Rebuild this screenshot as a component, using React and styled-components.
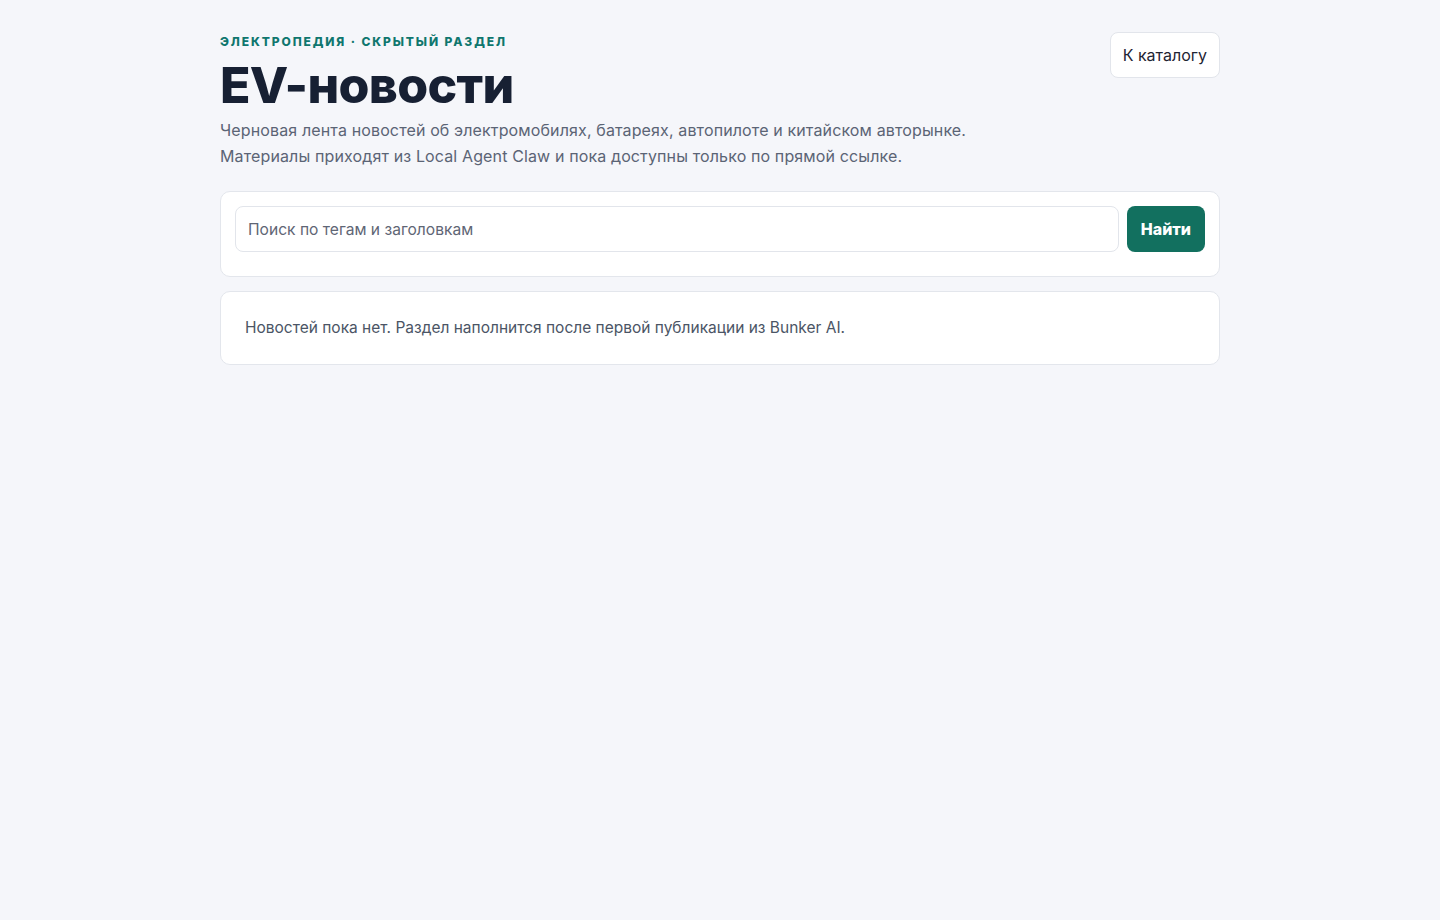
import React from "react";
import styled, { createGlobalStyle } from "styled-components";

const Global = createGlobalStyle`
  * { box-sizing: border-box; }
  body {
    margin: 0;
    background: #f5f6fa;
    font-family: Inter, "Noto Sans", sans-serif;
    color: #111827;
  }
`;

const Page = styled.div`
  width: 1000px;
  margin: 0 auto;
  padding-top: 33px;
  display: flex;
  flex-direction: column;
  gap: 14px;
`;

const Header = styled.header`
  display: flex;
  justify-content: space-between;
  align-items: flex-start;
  margin-top: -1px;
  margin-bottom: 8px;
`;

const Eyebrow = styled.div`
  margin-top: 1px;
  font-size: 12px;
  font-weight: 800;
  letter-spacing: 1.9px;
  text-transform: uppercase;
  color: #0f766e;
  line-height: 18px;
`;

const Title = styled.h1`
  margin: 5px 0 3px;
  font-size: 50px;
  font-weight: 800;
  line-height: 58px;
  letter-spacing: -0.7px;
  color: #172033;
`;

const Lead = styled.p`
  margin: 0;
  font-size: 16px;
  line-height: 26px;
  letter-spacing: 0.13px;
  color: #5b6475;
`;

const BackLink = styled.a`
  display: inline-flex;
  align-items: center;
  height: 46px;
  padding: 0 12px;
  border: 1px solid #e2e5eb;
  border-radius: 8px;
  background: #fff;
  font-size: 16px;
  color: #1f2433;
  text-decoration: none;
`;

const Card = styled.section`
  background: #fff;
  border: 1px solid #e3e6ec;
  border-radius: 10px;
  padding: ${(p) => p.$pad};
`;

const SearchRow = styled.form`
  display: flex;
  gap: 8px;
`;

const Input = styled.input`
  flex: 1;
  height: 46px;
  padding: 0 12px;
  border: 1px solid #e2e5eb;
  border-radius: 8px;
  font: inherit;
  font-size: 15.6px;
  color: #111827;
  outline: none;
  &::placeholder { color: #5f6675; }
`;

const Button = styled.button`
  height: 46px;
  padding: 0 14px;
  border: 0;
  border-radius: 8px;
  background: #12705f;
  color: #fff;
  font: inherit;
  font-size: 16px;
  font-weight: 800;
`;

const Empty = styled.p`
  margin: 0;
  font-size: 15.5px;
  line-height: 24px;
  color: #4b5565;
`;

export default function App() {
  return (
    <>
      <Global />
      <Page>
        <Header>
          <div>
            <Eyebrow>Электропедия · скрытый раздел</Eyebrow>
            <Title>EV-новости</Title>
            <Lead>
              Черновая лента новостей об электромобилях, батареях, автопилоте и китайском авторынке.
              <br />
              Материалы приходят из Local Agent Claw и пока доступны только по прямой ссылке.
            </Lead>
          </div>
          <BackLink href="#">К каталогу</BackLink>
        </Header>
        <Card $pad="14px 14px 24px">
          <SearchRow onSubmit={(e) => e.preventDefault()}>
            <Input placeholder="Поиск по тегам и заголовкам" />
            <Button type="submit">Найти</Button>
          </SearchRow>
        </Card>
        <Card $pad="24px">
          <Empty>Новостей пока нет. Раздел наполнится после первой публикации из Bunker AI.</Empty>
        </Card>
      </Page>
    </>
  );
}
